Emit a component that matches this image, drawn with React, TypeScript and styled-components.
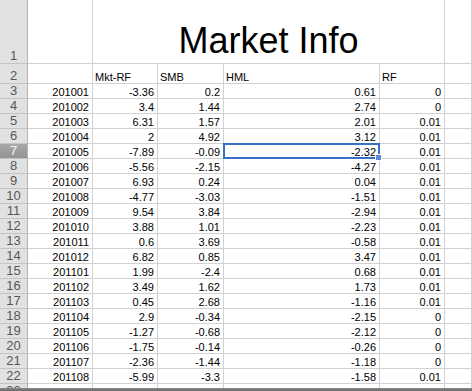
import React from 'react';
import styled, { createGlobalStyle } from 'styled-components';

const GlobalStyle = createGlobalStyle`
    html, body {
        margin: 0;
        padding: 0;
        background: #ffffff;
        overflow: hidden;
    }
`;

const Window = styled.div`
    width: 472px;
    height: 391px;
    display: flex;
    flex-direction: column;
    overflow: hidden;
    font-family: "Liberation Sans", Arial, sans-serif;
`;

const Sheet = styled.div`
    height: 388px;
    overflow: hidden;
    display: grid;
    grid-template-columns: 28px 65px 65px 66px 156px 65px 27px;
    grid-template-rows: 64px 20px;
    grid-auto-rows: 15px;
`;

const ScrollEdge = styled.div`
    height: 3px;
    background: linear-gradient(#8a8a8a, #6a6a6a);
`;

const RowHead = styled.div<{ $active?: boolean }>`
    box-sizing: border-box;
    border-right: 1px solid #b4b4b4;
    border-bottom: 1px solid #c4c4c4;
    background: ${p => (p.$active ? 'linear-gradient(#a9a9a9, #939393)' : '#e1e1e1')};
    color: ${p => (p.$active ? '#f4f4f4' : '#575757')};
    font-size: 13px;
    line-height: 13px;
    display: flex;
    align-items: flex-end;
    justify-content: center;
    padding-bottom: 1px;
`;

const Cell = styled.div<{ $align?: 'left' | 'right'; $selected?: boolean }>`
    position: relative;
    box-sizing: border-box;
    border-right: 1px solid #d2d2d2;
    border-bottom: 1px solid #d2d2d2;
    font-size: 11px;
    line-height: 12px;
    color: #000000;
    white-space: nowrap;
    display: flex;
    align-items: flex-end;
    justify-content: ${p => (p.$align === 'left' ? 'flex-start' : 'flex-end')};
    padding: 0 3px 0 2px;

    ${p =>
        p.$selected &&
        `
        &::after {
            content: '';
            position: absolute;
            top: -1px;
            left: -1px;
            right: -1px;
            bottom: -1px;
            border: 2px solid #3a6fc6;
            pointer-events: none;
        }
    `}
`;

const FillHandle = styled.span`
    position: absolute;
    right: -3px;
    bottom: -3px;
    width: 5px;
    height: 5px;
    background: #5b8ad6;
    border: 1px solid #ffffff;
    z-index: 2;
`;

const TitleCell = styled.div`
    grid-column: span 4;
    box-sizing: border-box;
    border-right: 1px solid #d2d2d2;
    border-bottom: 1px solid #d2d2d2;
    display: flex;
    align-items: flex-end;
    justify-content: center;
    font-size: 36px;
    line-height: 40px;
    padding-bottom: 2px;
    color: #000000;
`;

const headers = ['Mkt-RF', 'SMB', 'HML', 'RF'];

const data: string[][] = [
    ['201001', '-3.36', '0.2', '0.61', '0'],
    ['201002', '3.4', '1.44', '2.74', '0'],
    ['201003', '6.31', '1.57', '2.01', '0.01'],
    ['201004', '2', '4.92', '3.12', '0.01'],
    ['201005', '-7.89', '-0.09', '-2.32', '0.01'],
    ['201006', '-5.56', '-2.15', '-4.27', '0.01'],
    ['201007', '6.93', '0.24', '0.04', '0.01'],
    ['201008', '-4.77', '-3.03', '-1.51', '0.01'],
    ['201009', '9.54', '3.84', '-2.94', '0.01'],
    ['201010', '3.88', '1.01', '-2.23', '0.01'],
    ['201011', '0.6', '3.69', '-0.58', '0.01'],
    ['201012', '6.82', '0.85', '3.47', '0.01'],
    ['201101', '1.99', '-2.4', '0.68', '0.01'],
    ['201102', '3.49', '1.62', '1.73', '0.01'],
    ['201103', '0.45', '2.68', '-1.16', '0.01'],
    ['201104', '2.9', '-0.34', '-2.15', '0'],
    ['201105', '-1.27', '-0.68', '-2.12', '0'],
    ['201106', '-1.75', '-0.14', '-0.26', '0'],
    ['201107', '-2.36', '-1.44', '-1.18', '0'],
    ['201108', '-5.99', '-3.3', '-1.58', '0.01'],
    ['201109', '-7.59', '-3.72', '-0.88', '0'],
];

// active cell is D7
const activeRow = 7;
const activeCol = 3;

const App: React.FC = () => {
    return (
        <>
            <GlobalStyle />
            <Window>
                <Sheet>
                    <RowHead>1</RowHead>
                    <Cell />
                    <TitleCell>Market Info</TitleCell>
                    <Cell />

                    <RowHead>2</RowHead>
                    <Cell />
                    {headers.map(h => (
                        <Cell key={h} $align='left'>{h}</Cell>
                    ))}
                    <Cell />

                    {data.map((row, i) => {
                        const rowNum = i + 3;
                        return (
                            <React.Fragment key={rowNum}>
                                <RowHead $active={rowNum === activeRow}>{rowNum}</RowHead>
                                {row.map((v, c) => {
                                    const selected = rowNum === activeRow && c === activeCol;
                                    return (
                                        <Cell key={c} $selected={selected}>
                                            {v}
                                            {selected && <FillHandle />}
                                        </Cell>
                                    );
                                })}
                                <Cell />
                            </React.Fragment>
                        );
                    })}
                </Sheet>
                <ScrollEdge />
            </Window>
        </>
    );
};

export default App;
